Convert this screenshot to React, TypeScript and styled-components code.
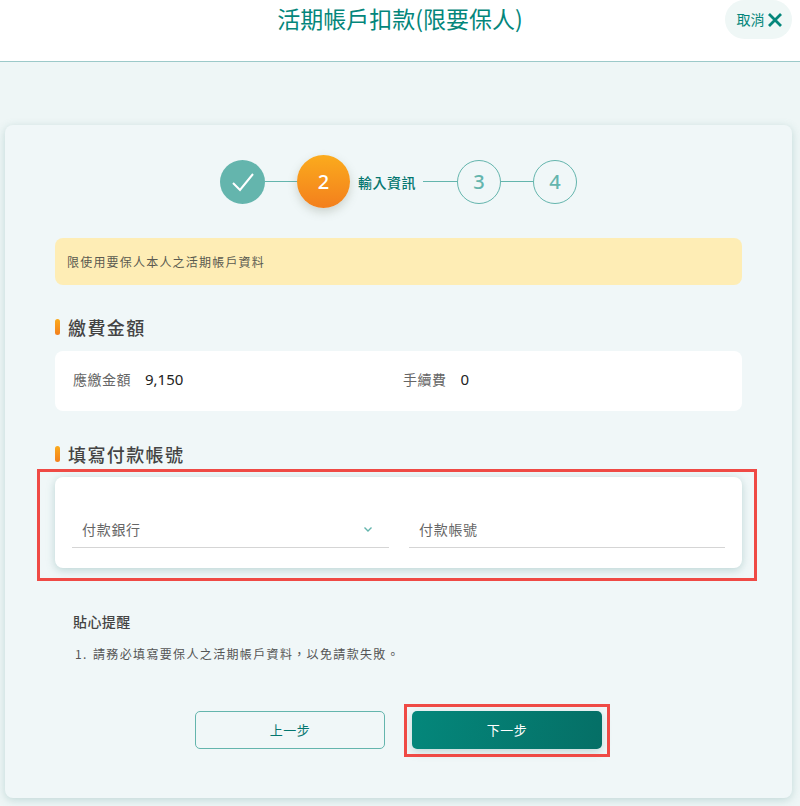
import React from "react";
import styled, { createGlobalStyle } from "styled-components";

const Global = createGlobalStyle`
  html, body { margin: 0; padding: 0; height: 806px; overflow: hidden; background: #eef6f6; }
  * { box-sizing: border-box; }
  body { font-family: "Noto Sans CJK TC", "Noto Sans", sans-serif; }
`;

const Page = styled.div`
  width: 800px;
  height: 806px;
  display: flex;
  flex-direction: column;
`;

const Header = styled.header`
  height: 62px;
  flex: none;
  background: #fff;
  border-bottom: 1px solid #9cc9c9;
  position: relative;
`;

const Title = styled.h1`
  margin: 0;
  width: 800px;
  text-align: center;
  padding-left: 0;
  font-size: 23px;
  line-height: 36px;
  font-weight: 400;
  letter-spacing: 0;
  color: #04867b;
`;

const Cancel = styled.button`
  position: absolute;
  top: 0;
  right: 8px;
  width: 67px;
  height: 39px;
  border: 0;
  border-radius: 20px;
  background: #eff7f6;
  color: #04867b;
  font: 400 14px/39px "Noto Sans CJK TC", sans-serif;
  display: flex;
  align-items: center;
  justify-content: center;
  gap: 2px;
  padding: 0 0 0 2px;
`;

const Card = styled.main`
  margin: 63px 8px 0 5px;
  height: 673px;
  border-radius: 8px;
  background: #f0f7f8;
  box-shadow: 0 2px 8px rgba(90, 150, 145, 0.3);
  padding: 30px 50px 0;
  display: flex;
  flex-direction: column;
`;

const Stepper = styled.div`
  height: 53px;
  display: flex;
  align-items: center;
  padding-left: 165px;
`;

const DoneDot = styled.div`
  width: 45px;
  height: 44px;
  border-radius: 50%;
  background: #64b5ad;
  display: flex;
  align-items: center;
  justify-content: center;
`;

const Line = styled.span<{ $w: number; $ml?: number }>`
  width: ${(p) => p.$w}px;
  margin-left: ${(p) => p.$ml ?? 0}px;
  height: 1px;
  background: #64b5ad;
`;

const ActiveDot = styled.div`
  width: 53px;
  height: 53px;
  border-radius: 50%;
  background: linear-gradient(180deg, #fbab1d, #f37f1d);
  box-shadow: 0 4px 10px rgba(120, 130, 110, 0.3);
  color: #fff;
  font: 500 20px/53px "Noto Sans", sans-serif;
  text-align: center;
`;

const StepLabel = styled.span`
  margin-left: 8px;
  font-size: 14px;
  font-weight: 500;
  line-height: 20px;
  letter-spacing: 0.5px;
  color: #04766f;
  white-space: nowrap;
`;

const TodoDot = styled.div`
  width: 44px;
  height: 44px;
  border-radius: 50%;
  border: 1px solid #64b5ad;
  color: #64b5ad;
  font: 500 20px/42px "Noto Sans", sans-serif;
  text-align: center;
`;

const Notice = styled.div`
  margin-top: 30px;
  height: 47px;
  border-radius: 8px;
  background: #feedb5;
  padding-left: 12px;
  font-size: 12px;
  line-height: 47px;
  letter-spacing: 1.2px;
  color: #5a5a50;
`;

const SectionTitle = styled.h2<{ $mt: number }>`
  margin: ${(p) => p.$mt}px 0 0;
  height: 22px;
  padding-left: 13px;
  position: relative;
  font-size: 18px;
  line-height: 22px;
  font-weight: 500;
  letter-spacing: 1.4px;
  color: #444;
  &::before {
    content: "";
    position: absolute;
    left: 0;
    top: 3px;
    width: 5px;
    height: 16px;
    border-radius: 3px;
    background: linear-gradient(180deg, #fbab1d, #f37f1d);
  }
`;

const AmountCard = styled.section`
  margin-top: 13px;
  height: 60px;
  border-radius: 8px;
  background: #fff;
  display: grid;
  grid-template-columns: 330px 1fr;
  padding: 0 0 4px 18px;
  align-items: center;
`;

const AmountItem = styled.div`
  display: flex;
  align-items: center;
  gap: 14px;
`;

const AmountLabel = styled.span`
  font-size: 14px;
  letter-spacing: 0.5px;
  color: #666;
`;

const AmountValue = styled.span`
  font: 400 15px/20px "Noto Sans", sans-serif;
  color: #222;
`;

const Highlight = styled.div`
  position: relative;
  &::after {
    content: "";
    position: absolute;
    pointer-events: none;
    border: 3px solid #ef4a45;
    inset: 4px -15px -13px -18px;
  }
`;

const FormCard = styled.section`
  margin-top: 12px;
  height: 91px;
  border-radius: 8px;
  background: #fff;
  box-shadow: 0 2px 8px rgba(90, 150, 145, 0.35);
  display: grid;
  grid-template-columns: 317px 316px;
  column-gap: 20px;
  padding: 34px 0 0 17px;
`;

const Field = styled.div`
  height: 37px;
  border-bottom: 1px solid #d5d5d5;
  padding: 7px 16px 0 10px;
  font-size: 14px;
  line-height: 22px;
  letter-spacing: 0.7px;
  color: #666;
  display: flex;
  align-items: flex-start;
  justify-content: space-between;
`;

const Tips = styled.section`
  margin-top: 43px;
  padding-left: 18px;
  color: #555;
`;

const TipsTitle = styled.h3`
  margin: 0;
  font-size: 14px;
  line-height: 20px;
  font-weight: 500;
  letter-spacing: 0.4px;
  color: #444;
`;

const TipsList = styled.ol`
  margin: 13px 0 0;
  padding: 0 0 0 2px;
  list-style: none;
  font-size: 12px;
  line-height: 20px;
  letter-spacing: 1.35px;
`;

const TipsItem = styled.li<{ $n: number }>`
  display: flex;
  &::before {
    content: "${(p) => p.$n}.";
    width: 18px;
    flex: none;
  }
`;

const Buttons = styled.div`
  margin-top: 47px;
  display: flex;
  padding-left: 140px;
  gap: 27px;
`;

const Ghost = styled.button`
  width: 190px;
  height: 38px;
  border: 1px solid #64b5ad;
  border-radius: 5px;
  background: transparent;
  color: #04766f;
  font: 400 13px/36px "Noto Sans CJK TC", sans-serif;
  letter-spacing: 0.5px;
  padding: 0;
`;

const Primary = styled.button`
  width: 190px;
  height: 38px;
  border: 0;
  border-radius: 5px;
  background: linear-gradient(100deg, #04877b, #056f66);
  box-shadow: 0 3px 10px rgba(90, 150, 145, 0.3);
  color: #fff;
  font: 400 13px/38px "Noto Sans CJK TC", sans-serif;
  letter-spacing: 0.5px;
  padding: 0;
`;

const ButtonMark = styled.div`
  position: relative;
  &::after {
    content: "";
    position: absolute;
    pointer-events: none;
    border: 3px solid #ef4a45;
    inset: -7px -8px -8px -8px;
  }
`;

export default function App() {
  return (
    <Page>
      <Global />
      <Header>
        <Title>活期帳戶扣款(限要保人)</Title>
        <Cancel>
          取消
          <svg width="16" height="16" viewBox="0 0 16 16" fill="none">
            <path d="M2 2 14 14M14 2 2 14" stroke="#04867b" strokeWidth="2.8" />
          </svg>
        </Cancel>
      </Header>
      <Card>
        <Stepper>
          <DoneDot>
            <svg width="24" height="24" viewBox="0 0 24 24" fill="none">
              <path d="M2 13 9 20 22 4" stroke="#fff" strokeWidth="2" />
            </svg>
          </DoneDot>
          <Line $w={32} />
          <ActiveDot>2</ActiveDot>
          <StepLabel>輸入資訊</StepLabel>
          <Line $w={34} $ml={7} />
          <TodoDot>3</TodoDot>
          <Line $w={32} />
          <TodoDot>4</TodoDot>
        </Stepper>
        <Notice>限使用要保人本人之活期帳戶資料</Notice>
        <SectionTitle $mt={31}>繳費金額</SectionTitle>
        <AmountCard>
          <AmountItem>
            <AmountLabel>應繳金額</AmountLabel>
            <AmountValue>9,150</AmountValue>
          </AmountItem>
          <AmountItem>
            <AmountLabel>手續費</AmountLabel>
            <AmountValue>0</AmountValue>
          </AmountItem>
        </AmountCard>
        <SectionTitle $mt={32}>填寫付款帳號</SectionTitle>
        <Highlight>
          <FormCard>
            <Field>
              付款銀行
              <svg width="10" height="22" viewBox="0 0 10 22" fill="none">
                <path d="M1.5 9.5 5 13l3.5-3.5" stroke="#64b5ad" strokeWidth="1.4" />
              </svg>
            </Field>
            <Field>付款帳號</Field>
          </FormCard>
        </Highlight>
        <Tips>
          <TipsTitle>貼心提醒</TipsTitle>
          <TipsList>
            <TipsItem $n={1}>請務必填寫要保人之活期帳戶資料，以免請款失敗。</TipsItem>
          </TipsList>
        </Tips>
        <Buttons>
          <Ghost>上一步</Ghost>
          <ButtonMark>
            <Primary>下一步</Primary>
          </ButtonMark>
        </Buttons>
      </Card>
    </Page>
  );
}
